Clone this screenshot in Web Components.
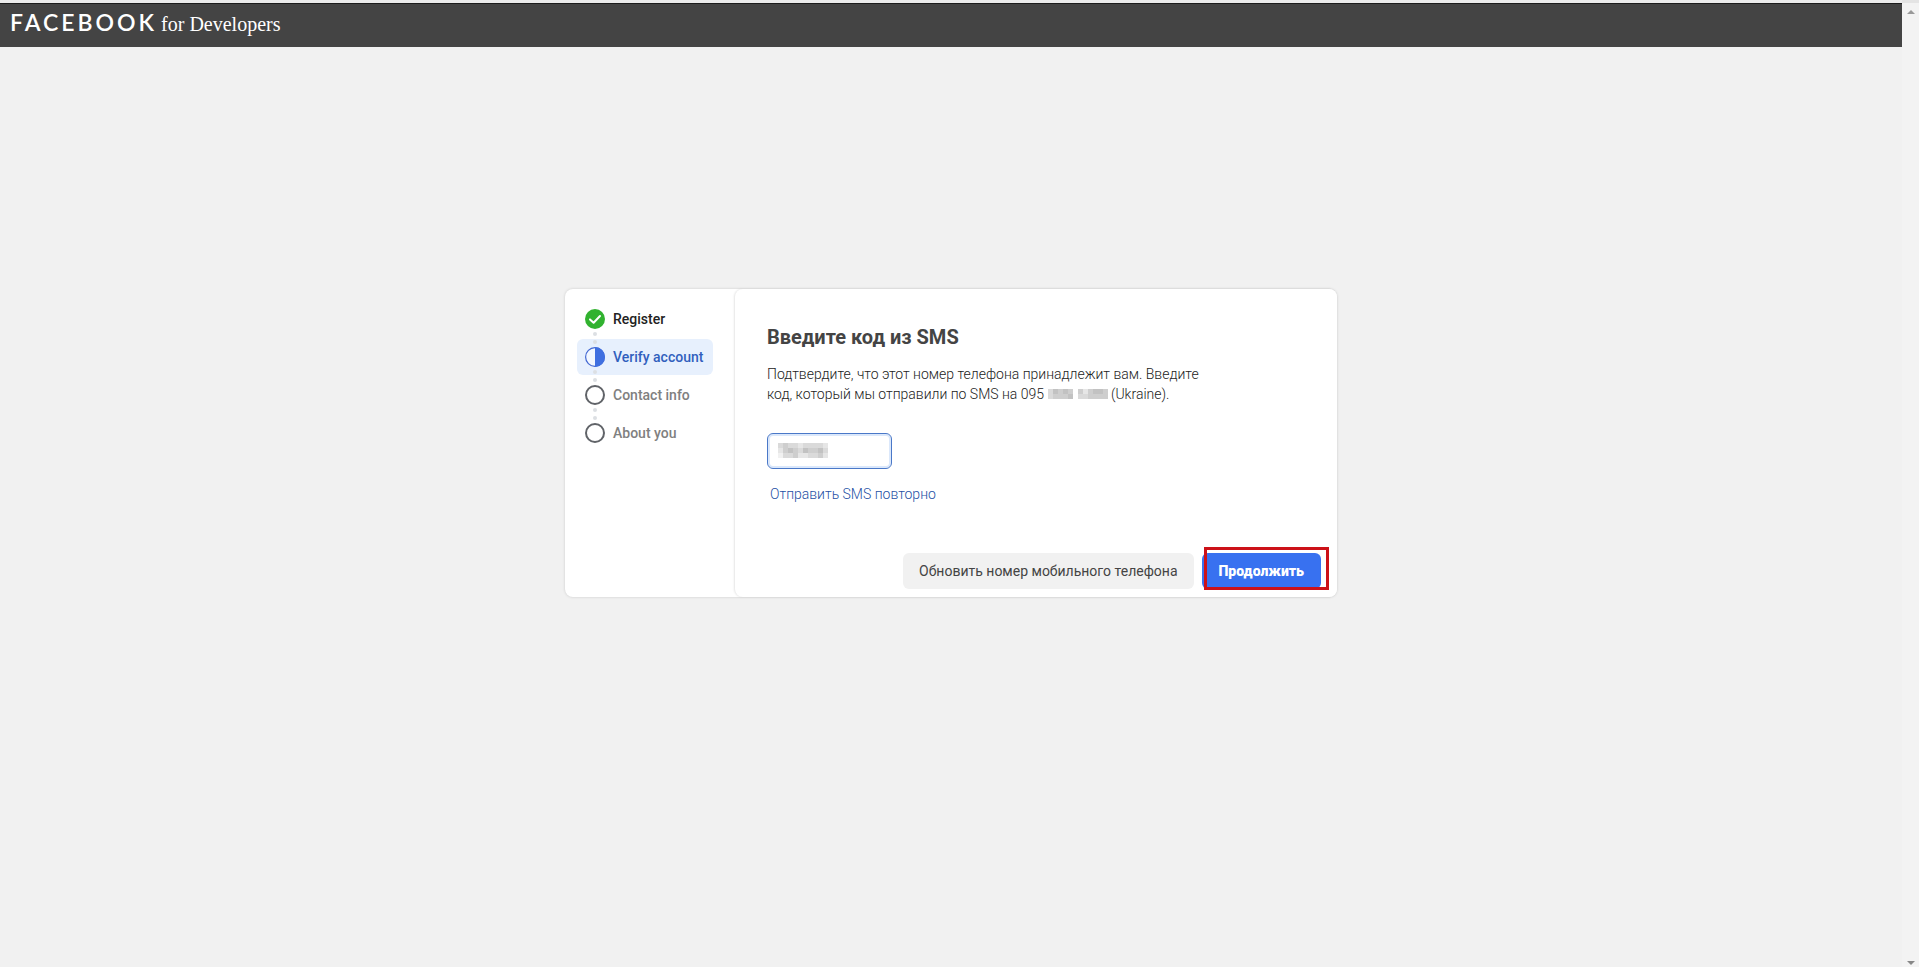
<!DOCTYPE html>
<html lang="ru">
<head>
<meta charset="utf-8">
<title>Facebook for Developers</title>
<style>
body { margin: 0; background: #f1f1f1; font: 14px/20px Roboto, "Liberation Sans", sans-serif; color: #222; }
</style>
</head>
<body>
<dev-page>
  <site-header slot="header"></site-header>
  <setup-card>
    <step-list slot="steps">
      <step-item state="done">Register</step-item>
      <step-item state="current">Verify account</step-item>
      <step-item state="todo">Contact info</step-item>
      <step-item state="todo">About you</step-item>
    </step-list>
    <sms-form></sms-form>
  </setup-card>
</dev-page>
<script>
const define = (name, html, setup) => customElements.define(name, class extends HTMLElement {
  constructor() {
    super();
    this.attachShadow({ mode: "open" }).innerHTML = html;
  }
  connectedCallback() { if (setup) setup(this); }
});

define("dev-page", `
<style>
:host { display: grid; grid-template-columns: 1fr 17px; min-height: 100vh; }
.page { display: flex; flex-direction: column; min-width: 0; }
main { flex: 1; display: grid; place-items: center; padding: 0 16px 128px; }
.rail { display: flex; flex-direction: column; justify-content: space-between; align-items: center; background: #f3f3f3; border-top: 3px solid #e4e4e4; padding: 7px 0 2px; box-sizing: border-box; }
svg { display: block; width: 8px; height: 4px; }
</style>
<div class="page"><slot name="header"></slot><main><slot></slot></main></div>
<div class="rail" aria-hidden="true">
  <svg viewBox="0 0 8 4"><path d="M0 4L4 0L8 4Z" fill="#999"/></svg>
  <svg viewBox="0 0 8 4"><path d="M0 0L4 4L8 0Z" fill="#888"/></svg>
</div>`);

define("site-header", `
<style>
:host { display: block; border-top: 3px solid #ececec; }
header { height: 44px; box-sizing: border-box; border-top: 1px solid #1c1c1c; background: #444; padding: 6px 10px; }
a { display: flex; align-items: baseline; gap: 4px; color: #fff; text-decoration: none; line-height: 24px; }
.brand { font-family: Lato, sans-serif; font-size: 23px; font-weight: 600; letter-spacing: 3px; }
.sub { font-family: "Liberation Serif", serif; font-size: 20px; }
</style>
<header><a href="#"><span class="brand">FACEBOOK</span><span class="sub">for Developers</span></a></header>`);

define("setup-card", `
<style>
:host { display: grid; grid-template-columns: 170px 1fr; width: 100%; max-width: 772px; background: #fff; border-radius: 8px; box-shadow: 0 0 3px rgba(0,0,0,.16); }
section { border-radius: 8px; box-shadow: -1px 0 2px rgba(0,0,0,.1); background: #fff; min-width: 0; }
</style>
<slot name="steps"></slot><section><slot></slot></section>`);

define("step-list", `
<style>
:host { display: flex; flex-direction: column; gap: 2px; padding: 12px 22px 12px 12px; }
</style><slot></slot>`);

const icons = {
  done: '<circle cx="10" cy="10" r="10" fill="#31b22f"/><path d="M5 10.4L8.6 13.8L15 7" fill="none" stroke="#fff" stroke-width="2" stroke-linecap="round" stroke-linejoin="round"/>',
  current: '<circle cx="10" cy="10" r="9.4" fill="#f2f7ff" stroke="#4267d2" stroke-width="1.2"/><path d="M10 0A10 10 0 0 1 10 20Z" fill="#3f6fe0"/>',
  todo: '<circle cx="10" cy="10" r="9" fill="#fff" stroke="#606368" stroke-width="2"/>'
};
define("step-item", `
<style>
:host { display: flex; align-items: center; gap: 8px; height: 36px; padding: 0 8px; border-radius: 6px; font-weight: 500; color: #808080; white-space: nowrap; }
:host([state=done]) { color: #222; }
:host([state=current]) { color: #315fbd; background: #e7f0fd; }
.mark { position: relative; width: 20px; height: 20px; }
svg { display: block; width: 20px; height: 20px; }
.mark::before, .mark::after { content: ""; position: absolute; left: 8px; width: 4px; height: 4px; border-radius: 50%; background: #dcdfe3; }
.mark::before { top: -7px; }
.mark::after { bottom: -7px; }
:host([state=done]) .mark::before, :host(:last-child) .mark::after { display: none; }
</style>
<span class="mark"></span><slot></slot>`, el => {
  el.shadowRoot.querySelector(".mark").innerHTML = '<svg viewBox="0 0 20 20" aria-hidden="true">' + icons[el.getAttribute("state")] + '</svg>';
});

/* Hides a private value behind a mosaic; each digit is a grey level, 0 is empty. */
const shades = ["none", "#f1f1f1", "#e6e6e6", "#dadada", "#cecece", "#c2c2c2", "#b4b4b4"];
define("hidden-value", `<style>:host { display: inline-block; } svg { display: block; }</style><svg aria-hidden="true"></svg>`, el => {
  const rows = el.getAttribute("cells").split(" "), s = +el.getAttribute("size");
  const svg = el.shadowRoot.querySelector("svg");
  svg.setAttribute("width", rows[0].length * s);
  svg.setAttribute("height", rows.length * s);
  svg.setAttribute("shape-rendering", "crispEdges");
  svg.innerHTML = rows.map((r, y) => [...r].map((c, x) =>
    `<rect x="${x * s}" y="${y * s}" width="${s}" height="${s}" fill="${shades[c]}"/>`).join("")).join("");
});

define("sms-form", `
<style>
:host { display: block; padding: 36px 16px 8px 32px; font-weight: 300; }
h1 { margin: 0 0 15px; font-size: 20px; line-height: 24px; font-weight: 700; color: #444; }
p { margin: 0 0 29px; max-width: 448px; }
.code { position: relative; width: 125px; }
input { display: block; box-sizing: border-box; width: 100%; height: 36px; border: 1px solid #4a78c8; border-radius: 6px; box-shadow: inset 0 0 0 2px #dbe8fb; padding: 0 12px; background: #fff; font: inherit; outline: none; }
.code hidden-value { position: absolute; left: 11px; top: 10px; }
.again { display: inline-block; margin: 15px 3px 0; color: #2450a4; text-decoration: none; }
footer { display: flex; justify-content: flex-end; gap: 8px; margin-top: 49px; }
button { height: 36px; border: 0; border-radius: 6px; padding: 0 16px; font: inherit; font-weight: 400; color: #444; background: #f1f1f1; white-space: nowrap; }
.next { position: relative; }
.next button { padding: 0 17px; background: #3871f0; color: #fff; font-weight: 900; }
.next::after { content: ""; position: absolute; inset: -6px -8px -1px 2px; border: 3px solid #cc1118; pointer-events: none; }
</style>
<form>
<h1>Введите код из SMS</h1>
<p>Подтвердите, что этот номер телефона принадлежит вам. Введите<br>код, который мы отправили по SMS на 095 <hidden-value size="5" cells="354540424554 344450334444"></hidden-value> (Ukraine).</p>
<div class="code"><input type="text" aria-label="Код из SMS"><hidden-value size="5" cells="3433233332 2454354453 1334223342"></hidden-value></div>
<a class="again" href="#">Отправить SMS повторно</a>
<footer><button type="button">Обновить номер мобильного телефона</button><span class="next"><button type="button">Продолжить</button></span></footer>
</form>`);
</script>
</body>
</html>
